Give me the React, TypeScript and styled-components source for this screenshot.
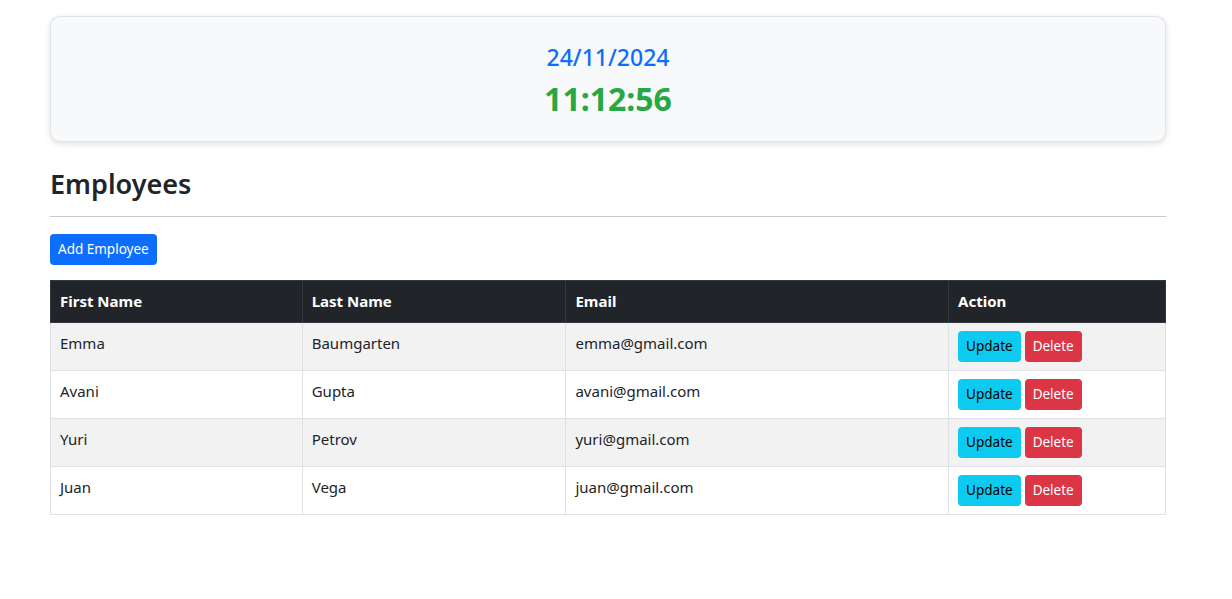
import * as React from 'react'
import styled, { createGlobalStyle } from 'styled-components'

const GlobalStyle = createGlobalStyle`
  * { box-sizing: border-box; }
  body {
    margin: 0;
    background: #fff;
    font-family: 'Noto Sans', 'Open Sans', sans-serif;
    color: #212529;
  }
`

const Page = styled.div`
  width: 1116px;
  margin-left: 50px;
  padding-top: 16px;
`
const ClockCard = styled.div`
  height: 126px;
  background: #f8f9fa;
  border: 1px solid #dee2e6;
  border-radius: 10px;
  box-shadow: 0 2px 6px rgba(0, 0, 0, 0.12);
  display: flex;
  flex-direction: column;
  align-items: center;
  padding-top: 24px;
`
const DateText = styled.div`
  font-size: 23px;
  line-height: 32px;
  font-weight: 500;
  color: #0d6efd;
`
const TimeText = styled.div`
  font-size: 32px;
  line-height: 44px;
  font-weight: 700;
  color: #28a745;
  margin-top: 4px;
`
const Title = styled.h2`
  margin: 23px 0 0 0;
  font-size: 27px;
  line-height: 38px;
  font-weight: 600;
`
const Divider = styled.hr`
  margin: 13px 0 17px 0;
  border: 0;
  border-top: 1px solid #c8c8c8;
`
const Button = styled.button<{ $variant: 'primary' | 'info' | 'danger' }>`
  font-family: inherit;
  font-size: 13.5px;
  line-height: 21px;
  padding: 5px 8px;
  border: 0;
  border-radius: 4px;
  cursor: pointer;
  background: ${p => ({ primary: '#0d6efd', info: '#0dcaf0', danger: '#dc3545' }[p.$variant])};
  color: ${p => (p.$variant === 'info' ? '#000' : '#fff')};
`
const Table = styled.table`
  width: 100%;
  margin-top: 15px;
  border-collapse: collapse;
  font-size: 15px;
`
const HeadCell = styled.th<{ $width: number }>`
  width: ${p => p.$width}px;
  text-align: left;
  background: #212529;
  color: #fff;
  font-weight: 700;
  padding: 8px 9px;
  line-height: 25px;
  border: 1px solid #32383e;
`
const Row = styled.tr<{ $striped: boolean }>`
  background: ${p => (p.$striped ? '#f2f2f2' : '#fff')};
`
const Cell = styled.td`
  padding: 8px 9px;
  line-height: 24px;
  vertical-align: top;
  border: 1px solid #dee2e6;
`
const Actions = styled.div`
  display: flex;
  gap: 4px;
`

const employees = [
  { first: 'Emma', last: 'Baumgarten', email: 'emma@gmail.com' },
  { first: 'Avani', last: 'Gupta', email: 'avani@gmail.com' },
  { first: 'Yuri', last: 'Petrov', email: 'yuri@gmail.com' },
  { first: 'Juan', last: 'Vega', email: 'juan@gmail.com' },
]

export default function App() {
  return (
    <Page>
      <GlobalStyle />
      <ClockCard>
        <DateText>24/11/2024</DateText>
        <TimeText>11:12:56</TimeText>
      </ClockCard>
      <Title>Employees</Title>
      <Divider />
      <Button $variant="primary">Add Employee</Button>
      <Table>
        <thead>
          <tr>
            <HeadCell $width={252}>First Name</HeadCell>
            <HeadCell $width={264}>Last Name</HeadCell>
            <HeadCell $width={383}>Email</HeadCell>
            <HeadCell $width={217}>Action</HeadCell>
          </tr>
        </thead>
        <tbody>
          {employees.map((e, i) => (
            <Row key={e.email} $striped={i % 2 === 0}>
              <Cell>{e.first}</Cell>
              <Cell>{e.last}</Cell>
              <Cell>{e.email}</Cell>
              <Cell>
                <Actions>
                  <Button $variant="info">Update</Button>
                  <Button $variant="danger">Delete</Button>
                </Actions>
              </Cell>
            </Row>
          ))}
        </tbody>
      </Table>
    </Page>
  )
}
